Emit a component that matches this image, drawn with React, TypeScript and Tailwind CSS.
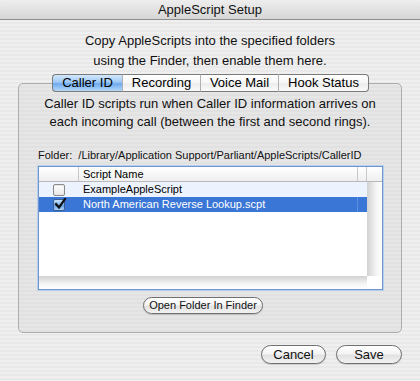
import React from "react";

const font = { fontFamily: '"Liberation Sans", Arial, sans-serif' };

function Check({ checked }: { checked: boolean }) {
  if (!checked) {
    return (
      <div className="w-[12px] h-[12px] rounded-[2px] border border-[#8a8a8a] bg-[linear-gradient(to_bottom,#ffffff,#e6e6e6)] shadow-[inset_0_1px_1px_rgba(0,0,0,0.1)]" />
    );
  }
  return (
    <div className="relative w-[12px] h-[12px] rounded-[2px] border border-[#3d5f92] bg-[linear-gradient(to_bottom,#c6e0fa_0%,#7fb4ee_50%,#5b9ae5_51%,#a9d3f8_100%)]">
      <svg className="absolute left-[0px] top-[-2px]" width="13" height="12" viewBox="0 0 13 12">
        <path d="M2 6 L5 9.5 L11 1" fill="none" stroke="#111" strokeWidth="2.2" strokeLinecap="square" />
      </svg>
    </div>
  );
}

function AquaButton({ label, className }: { label: string; className: string }) {
  return (
    <div
      className={`flex items-center justify-center rounded-full border border-[#6e6e6e] bg-[linear-gradient(to_bottom,#ffffff_0%,#f4f4f4_45%,#e2e2e2_55%,#f2f2f2_100%)] shadow-[0_1px_1px_rgba(0,0,0,0.15)] text-[#111] ${className}`}
    >
      {label}
    </div>
  );
}

export default function App() {
  const tabs = [
    { label: "Caller ID", w: "w-[70px]", sel: true },
    { label: "Recording", w: "w-[78px]", sel: false },
    { label: "Voice Mail", w: "w-[78px]", sel: false },
    { label: "Hook Status", w: "w-[91px]", sel: false },
  ];
  return (
    <div
      style={font}
      className="w-[420px] h-[381px] overflow-hidden flex flex-col bg-[repeating-linear-gradient(to_bottom,#efefef_0px,#efefef_2px,#e9e9e9_2px,#e9e9e9_4px)] text-[#000]"
    >
      {/* Title bar */}
      <div className="h-[20px] shrink-0 flex items-center justify-center rounded-t-[5px] border-b border-[#8e8e8e] bg-[linear-gradient(to_bottom,#eeeeee,#d6d6d6)] text-[13px] text-[#111]">
        AppleScript Setup
      </div>

      {/* Description */}
      <div className="mt-[11px] flex flex-col items-center text-[13px] leading-[20px] text-[#111]">
        <div>Copy AppleScripts into the specified folders</div>
        <div>using the Finder, then enable them here.</div>
      </div>

      {/* Tab group */}
      <div className="mt-[3px] ml-[18px] w-[384px] flex flex-col">
        <div className="relative z-10 h-[18px] flex ml-[34px]">
          {tabs.map((t, i) => (
            <div
              key={t.label}
              className={`${t.w} h-[18px] flex items-center justify-center text-[13px] border-y border-[#7a7a7a] ${
                i === 0 ? "border-l rounded-l-[4px]" : "border-l border-l-[#b0b0b0]"
              } ${i === tabs.length - 1 ? "border-r rounded-r-[4px]" : ""} ${
                t.sel
                  ? "border-[#4a6fa5] bg-[linear-gradient(to_bottom,#d4e8fc_0%,#9cc8f5_45%,#6eaaee_55%,#b4daf9_100%)]"
                  : "bg-[linear-gradient(to_bottom,#ffffff_0%,#f6f6f6_50%,#ececec_51%,#fafafa_100%)]"
              }`}
            >
              {t.label}
            </div>
          ))}
        </div>
        <div className="-mt-[9px] h-[250px] rounded-[5px] border border-[#acacac] bg-[repeating-linear-gradient(to_bottom,#e6e6e6_0px,#e6e6e6_2px,#e1e1e1_2px,#e1e1e1_4px)] flex flex-col pl-[19px] pt-[11px]">
          <div className="flex flex-col items-center pr-[19px] text-[13px] leading-[18px] text-[#111]">
            <div>Caller ID scripts run when Caller ID information arrives on</div>
            <div>each incoming call (between the first and second rings).</div>
          </div>
          <div className="mt-[17px] h-[14px] leading-[14px] text-[11px] text-[#111] whitespace-pre">
            {"Folder:  /Library/Application Support/Parliant/AppleScripts/CallerID"}
          </div>

          {/* Table */}
          <div className="mt-[4px] w-[345px] h-[124px] border border-[#7096cc] shadow-[0_0_0_1px_#b6cfee] bg-white flex text-[11px]">
            <div className="flex-1 flex flex-col">
              <div className="h-[15px] flex border-b border-[#b9b9b9] bg-[linear-gradient(to_bottom,#ffffff,#efefef)]">
                <div className="w-[40px] border-r border-[#c8c8c8]" />
                <div className="flex-1 border-r border-[#c8c8c8] pl-[4px] leading-[14px]">Script Name</div>
                <div className="w-[9px] border-r border-[#c8c8c8]" />
              </div>
              <div className="h-[15px] flex items-center bg-[#edf3fe]">
                <div className="w-[40px] flex justify-center">
                  <Check checked={false} />
                </div>
                <div className="flex-1 pl-[4px] leading-[15px]">ExampleAppleScript</div>
              </div>
              <div className="h-[15px] flex items-center bg-[#3a76d6] text-white">
                <div className="w-[40px] flex justify-center">
                  <Check checked={true} />
                </div>
                <div className="flex-1 pl-[4px] leading-[15px] border-r border-[#5d8fe0]">North American Reverse Lookup.scpt</div>
                <div className="w-[9px]" />
              </div>
              <div className="flex-1" />
              <div className="h-[13px] bg-[linear-gradient(to_bottom,#d2d2d2,#f4f4f4_60%,#ffffff)]" />
            </div>
            <div className="w-[15px] flex flex-col">
              <div className="h-[15px] border-b border-[#b9b9b9] bg-[linear-gradient(to_bottom,#ffffff,#efefef)]" />
              <div className="flex-1 bg-[linear-gradient(to_right,#d2d2d2,#f4f4f4_60%,#ffffff)]" />
              <div className="h-[13px] bg-white" />
            </div>
          </div>

          <AquaButton label="Open Folder In Finder" className="mt-[7px] ml-[105px] w-[120px] h-[17px] text-[11px]" />
        </div>
      </div>

      {/* Bottom buttons */}
      <div className="mt-[12px] flex justify-end gap-[10px] pr-[18px]">
        <AquaButton label="Cancel" className="w-[65px] h-[19px] text-[13px]" />
        <AquaButton label="Save" className="w-[66px] h-[19px] text-[13px]" />
      </div>
    </div>
  );
}
